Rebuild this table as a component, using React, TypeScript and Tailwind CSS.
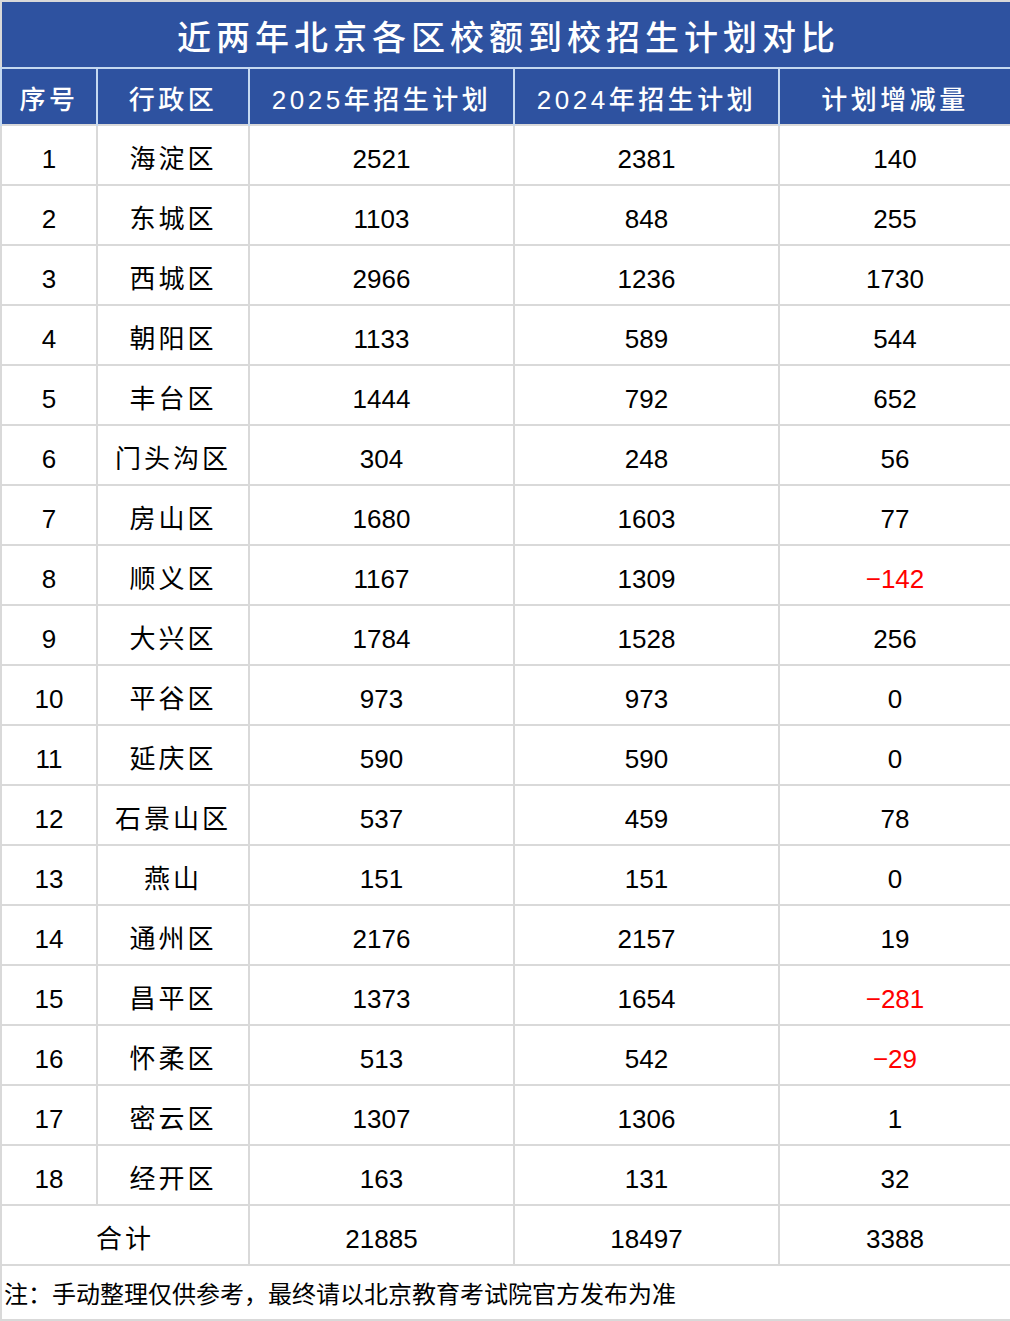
import React from 'react';

type Row = [number, string, number, number, number];

const rows: Row[] = [
  [1, '海淀区', 2521, 2381, 140],
  [2, '东城区', 1103, 848, 255],
  [3, '西城区', 2966, 1236, 1730],
  [4, '朝阳区', 1133, 589, 544],
  [5, '丰台区', 1444, 792, 652],
  [6, '门头沟区', 304, 248, 56],
  [7, '房山区', 1680, 1603, 77],
  [8, '顺义区', 1167, 1309, -142],
  [9, '大兴区', 1784, 1528, 256],
  [10, '平谷区', 973, 973, 0],
  [11, '延庆区', 590, 590, 0],
  [12, '石景山区', 537, 459, 78],
  [13, '燕山', 151, 151, 0],
  [14, '通州区', 2176, 2157, 19],
  [15, '昌平区', 1373, 1654, -281],
  [16, '怀柔区', 513, 542, -29],
  [17, '密云区', 1307, 1306, 1],
  [18, '经开区', 163, 131, 32],
];

const font = { fontFamily: '"Liberation Sans", "Noto Sans CJK SC", sans-serif' };

function fmtDelta(n: number) {
  return n < 0 ? `\u2212${Math.abs(n)}` : `${n}`;
}

export default function App() {
  const cell = 'border-2 border-[#d9d9d9] text-center align-middle h-[60px] p-0 pt-[8px]';
  const head = 'border-x-2 border-[#c5d9f1] text-center align-middle h-[57px] p-0 pt-[8px] tracking-[3.5px] font-medium';

  return (
    <div className="w-[1010px] bg-white text-black" style={font}>
      <table className="w-[1010px] border-collapse table-fixed border-2 border-[#d9d9d9]">
        <colgroup>
          <col className="w-[96px]" />
          <col className="w-[152px]" />
          <col className="w-[265px]" />
          <col className="w-[265px]" />
          <col className="w-[232px]" />
        </colgroup>
        <tbody>
          <tr className="bg-[#2e52a0] text-white">
            <td colSpan={5} className="h-[67px] text-center align-middle text-[34px] tracking-[5px] font-medium border-b-2 border-[#c5d9f1] pl-[5px] pt-[7px]">
              近两年北京各区校额到校招生计划对比
            </td>
          </tr>
          <tr className="bg-[#2e52a0] text-white text-[26px]">
            <td className={head}>序号</td>
            <td className={head}>行政区</td>
            <td className={head}>2025年招生计划</td>
            <td className={head}>2024年招生计划</td>
            <td className={head}>计划增减量</td>
          </tr>
          {rows.map(([no, name, a, b, d]) => (
            <tr key={no} className="text-[26px]">
              <td className={cell}>{no}</td>
              <td className={`${cell} tracking-[3px]`}>{name}</td>
              <td className={cell}>{a}</td>
              <td className={cell}>{b}</td>
              <td className={`${cell} ${d < 0 ? 'text-[#ff0000]' : ''}`}>{fmtDelta(d)}</td>
            </tr>
          ))}
          <tr className="text-[26px]">
            <td colSpan={2} className={`${cell} tracking-[3px]`}>合计</td>
            <td className={cell}>21885</td>
            <td className={cell}>18497</td>
            <td className={cell}>3388</td>
          </tr>
          <tr>
            <td colSpan={5} className="border-2 border-[#d9d9d9] h-[55px] text-left align-middle text-[24px] pl-[2px] pt-[5px]">
              注：手动整理仅供参考，最终请以北京教育考试院官方发布为准
            </td>
          </tr>
        </tbody>
      </table>
    </div>
  );
}
